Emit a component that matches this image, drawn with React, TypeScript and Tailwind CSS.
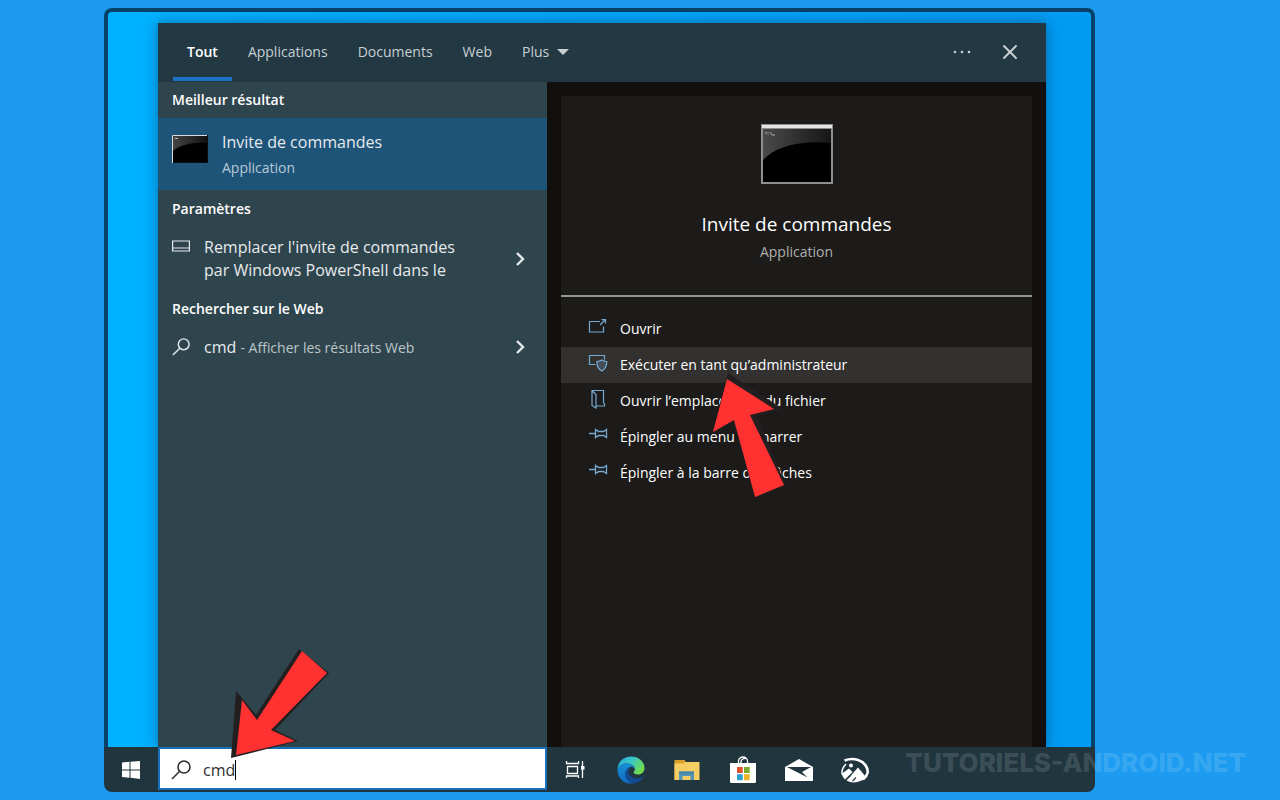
import type { ReactNode } from 'react';
import { X } from 'lucide-react';

interface Action {
  label: string;
  icon: ReactNode;
  active?: boolean;
}

const TABS = ['Applications', 'Documents', 'Web'];

function ConsoleIcon() {
  return (
    <svg viewBox="0 0 72 60" className="h-[60px] w-[72px]" aria-hidden="true">
      <defs>
        <linearGradient id="console-gloss" x1="0" y1="0" x2="1" y2="0">
          <stop offset="0" stopColor="#4a4a4a" />
          <stop offset="1" stopColor="#161616" />
        </linearGradient>
      </defs>
      <rect width="72" height="60" fill="#8f8f93" />
      <rect x="1" y="1" width="70" height="3" fill="#e4e4e6" />
      <rect x="2" y="5" width="68" height="53" fill="#000" />
      <path d="M2 5h68v14C40 16 15 22 2 36z" fill="url(#console-gloss)" />
      <path d="M4 9h2M7 8v1M7 10v1M9 8l2 3M11 11h3" stroke="#aaa" strokeWidth="1" fill="none" />
    </svg>
  );
}

function SmallConsoleIcon() {
  return (
    <svg viewBox="0 0 36 29" className="mt-4 mr-3.5 h-[29px] w-9" aria-hidden="true">
      <defs>
        <linearGradient id="console-gloss-small" x1="0" y1="0" x2="1" y2="0">
          <stop offset="0" stopColor="#454545" />
          <stop offset="1" stopColor="#111" />
        </linearGradient>
      </defs>
      <rect x="0" y="1" width="36" height="28" fill="#0b0f14" />
      <rect x="1" y="2" width="34" height="26" fill="#000" />
      <path d="M1 2h34v7C20 8 8 11 1 17z" fill="url(#console-gloss-small)" />
      <path d="M.5 29V1.500H35" fill="none" stroke="#d5dbe0" strokeWidth="1" />
      <path d="M3 4.500h3" stroke="#bbb" strokeWidth="1" />
    </svg>
  );
}

function SearchIcon({ className }: { className: string }) {
  return (
    <svg viewBox="0 0 20 20" fill="none" stroke="currentColor" strokeWidth="1.6" className={className} aria-hidden="true">
      <circle cx="13" cy="7" r="6" />
      <path d="M8.700 11.300 1 19" />
    </svg>
  );
}

function Chevron() {
  return (
    <svg viewBox="0 0 10 14" fill="none" stroke="currentColor" strokeWidth="2.4" className="h-3.5 w-2.5" aria-hidden="true">
      <path d="m2 1 6 6-6 6" />
    </svg>
  );
}

function OpenIcon() {
  return (
    <svg viewBox="0 0 20 20" fill="none" stroke="currentColor" strokeWidth="1.2" className="size-5" aria-hidden="true">
      <path d="M12 4.500H1.500v10.500h14V9.500M12 8l5-5M13.500 2.600h4v4" />
    </svg>
  );
}

function AdminIcon() {
  return (
    <svg viewBox="0 0 20 20" fill="none" stroke="currentColor" strokeWidth="1.2" className="size-5" aria-hidden="true">
      <path d="M7.500 11.500h-6v-9h15v4" />
      <path d="M13.800 7c1.400 1 3 1.500 5 1.500 0 4.500-1.400 7.500-5 9.500-3.600-2-5-5-5-9.500 2 0 3.600-.5 5-1.500z" fill="#76a9d2" fillOpacity=".25" />
    </svg>
  );
}

function FolderLocationIcon() {
  return (
    <svg viewBox="0 0 20 20" fill="none" stroke="currentColor" strokeWidth="1.200" className="size-5" aria-hidden="true">
      <path d="M8 17h8.500v-2l-1-1.500V1.500H4V16.500l4 2.500V5.500l-4-4" />
    </svg>
  );
}

function PinIcon() {
  return (
    <svg viewBox="0 0 20 20" fill="none" stroke="currentColor" strokeWidth="1.300" className="size-5" aria-hidden="true">
      <path d="M1 8.500h6.500M7.500 3.500v10M7.500 5.500h2l1 1h5l3-2v8l-3-2h-5l-1 1h-2" />
    </svg>
  );
}

const ACTIONS: Action[] = [
  { label: 'Ouvrir', icon: <OpenIcon /> },
  { label: 'Exécuter en tant qu’administrateur', icon: <AdminIcon />, active: true },
  { label: 'Ouvrir l’emplacement du fichier', icon: <FolderLocationIcon /> },
  { label: 'Épingler au menu Démarrer', icon: <PinIcon /> },
  { label: 'Épingler à la barre des tâches', icon: <PinIcon /> },
];

function ActionArrow() {
  return (
    <svg viewBox="0 0 84 132" className="pointer-events-none absolute top-[25px] left-[147px] z-10 h-[132px] w-[84px]" aria-hidden="true">
      <path d="M20 1 75 37l-26 7 29 70-31 12-22-76-21 11z" fill="#231f20" />
      <path d="M19 7 66 37 42 43l34 70-29 12L26 48 5 60z" fill="#ff3131" />
    </svg>
  );
}

function SearchArrow() {
  return (
    <svg viewBox="0 0 102 114" className="pointer-events-none absolute -top-[102px] left-[71px] z-10 h-[114px] w-[102px]" aria-hidden="true">
      <path d="M2 113 7 46l20 24L70 4l30 24-54 57 23 11z" fill="#231f20" />
      <path d="M7 110 13 55l15 20L73 6l25 22-56 57 24 11z" fill="#ff3131" />
    </svg>
  );
}

function SearchHeader() {
  return (
    <header className="flex h-[59px] items-stretch bg-[#223843] pr-6 pb-px pl-[15px] text-sm text-[#c8d0d4]">
      <nav className="flex flex-1 items-stretch gap-[30px]">
        <button className="-mr-3.5 border-y-4 border-t-transparent border-b-[#1a74c4] px-3.5 font-semibold text-white">Tout</button>
        {TABS.map((tab) => (
          <button key={tab}>{tab}</button>
        ))}
        <button className="flex items-center gap-2">
          Plus
          <svg viewBox="0 0 12 7" className="h-[7px] w-3 fill-current" aria-hidden="true"><path d="M0 0h12L6 6z" /></svg>
        </button>
      </nav>
      <button aria-label="Options" className="mr-[26px]">
        <svg viewBox="0 0 20 4" className="h-1 w-5 fill-current" aria-hidden="true">
          <circle cx="3" cy="2" r="1.300" />
          <circle cx="10" cy="2" r="1.300" />
          <circle cx="17" cy="2" r="1.300" />
        </svg>
      </button>
      <button aria-label="Fermer"><X className="size-6" strokeWidth={2} /></button>
    </header>
  );
}

function Results() {
  return (
    <section className="w-[389px] shrink-0 bg-[#2f454e] text-[#e6eaec]">
      <h2 className="flex h-9 items-center px-3.5 text-sm font-semibold text-white">Meilleur résultat</h2>
      <button className="flex h-[72px] w-full items-start bg-[#1f5479] px-3.5 text-left">
        <SmallConsoleIcon />
        <span className="flex flex-col pt-3">
          <span className="text-base leading-6">Invite de commandes</span>
          <span className="mt-1 text-sm leading-5 text-[#b5cad8]">Application</span>
        </span>
      </button>
      <h2 className="flex h-[38px] items-center px-3.5 text-sm font-semibold text-white">Paramètres</h2>
      <button className="flex h-[62px] w-full items-center pr-[22px] pl-3.5 text-left">
        <svg viewBox="0 0 18 12" fill="none" stroke="currentColor" strokeWidth="1.200" className="mt-3 h-3 w-[18px] self-start" aria-hidden="true">
          <path d="M.6 1h16.800v10H.6zM.6 8h16.800" />
        </svg>
        <span className="ml-3.5 flex-1 text-base leading-[23px]">
          Remplacer l'invite de commandes
          <br />
          par Windows PowerShell dans le
        </span>
        <Chevron />
      </button>
      <h2 className="flex h-[38px] items-center px-3.5 text-sm font-semibold text-white">Rechercher sur le Web</h2>
      <button className="flex h-[38px] w-full items-center pr-[22px] pl-3.5 text-left">
        <SearchIcon className="size-[18px]" />
        <span className="ml-3.5 flex-1 text-base">
          cmd <span className="text-sm text-[#bcc5c9]">- Afficher les résultats Web</span>
        </span>
        <Chevron />
      </button>
    </section>
  );
}

function Details() {
  return (
    <section className="flex flex-1 bg-[#11100f] px-3.5 pt-3.5">
      <div className="flex-1 bg-[#1c1b19] text-white">
        <div className="flex h-[201px] flex-col items-center border-b-2 border-[#93938f] pt-7">
          <ConsoleIcon />
          <h1 className="mt-[26px] text-[19px] leading-7">Invite de commandes</h1>
          <p className="mt-0.5 text-sm leading-6 text-[#b0afae]">Application</p>
        </div>
        <ul className="mt-3.5">
          {ACTIONS.map(({ label, icon, active }) => (
            <li key={label} className="relative">
              <button className={`flex h-9 w-full items-center gap-3 pl-[27px] text-left text-sm ${active ? 'bg-[#323130]' : ''}`}>
                <span className="mb-1 text-[#76a9d2]">{icon}</span>
                {label}
              </button>
              {active && <ActionArrow />}
            </li>
          ))}
        </ul>
      </div>
    </section>
  );
}

function TaskViewIcon() {
  return (
    <svg viewBox="0 0 20 20" fill="none" stroke="currentColor" strokeWidth="1.300" className="size-5" aria-hidden="true">
      <path d="M1.500 1v2.500h12V1M2.500 6.500h10v7h-10zM1.500 18v-2h12v2M17.500 1v17" />
      <path d="M16 6h3.500v3.500H16z" fill="currentColor" stroke="none" />
    </svg>
  );
}

function EdgeIcon() {
  return (
    <svg viewBox="0 0 28 28" className="size-7" aria-hidden="true">
      <defs>
        <linearGradient id="edge-top" x1="0" y1="0" x2="1" y2=".5">
          <stop offset="0" stopColor="#269fd8" />
          <stop offset=".5" stopColor="#38c9c8" />
          <stop offset="1" stopColor="#6edb51" />
        </linearGradient>
        <linearGradient id="edge-body" x1="0" y1="0" x2="0" y2="1">
          <stop offset="0" stopColor="#1690d8" />
          <stop offset="1" stopColor="#126bc0" />
        </linearGradient>
      </defs>
      <path d="M.5 13C1 5.500 7 .5 14 .5c8 0 13.500 5.500 13.500 11.500 0 4-3 6.500-6.500 6.500-3 0-4.500-1.200-4.500-2 0-.7 1.300-1.300 1.300-3.500C17.800 9.800 14 7.500 9.500 7.500 5.500 7.500 2 9.500.5 13z" fill="url(#edge-top)" />
      <path d="M.5 13C2 9.500 5.500 7.500 9.500 7.500c4.500 0 8.300 2.300 8.300 5.500-1-1.800-3-2.500-4.600-2-4 1.500-6 6-4 10.500 1.500 3.500 4.500 5.500 7.300 5.700C7.500 29 .5 22.500.5 14z" fill="url(#edge-body)" />
      <path d="M10.500 12.500c-3 3.500-3.500 8.500.5 12.500 4.500 4.200 12 2 15-3.500.4-.8-.1-1.200-.8-.8C19 24 12 21.500 11.500 16c0-1.500.5-2.700 1.700-4-.9-.2-2 .1-2.700.5z" fill="#134a91" />
    </svg>
  );
}

function ExplorerIcon() {
  return (
    <svg viewBox="0 0 26 22" className="h-[22px] w-[26px]" aria-hidden="true">
      <path d="M.5 1h10l1.500 2h12.500v18H.5z" fill="#dda12f" />
      <path d="M.5 4.500h9L12 3h13.500v18H.5z" fill="#f5cd62" />
      <path d="M5 21v-8.500h15V21h-3.500v-4h-8v4z" fill="#5295b8" />
      <path d="M5 12.500h15V15H5z" fill="#4885a8" />
    </svg>
  );
}

function StoreIcon() {
  return (
    <svg viewBox="0 0 28 28" className="size-7" aria-hidden="true">
      <path d="M9.500 8V5a4.500 4 0 0 1 9 0v3M12 8V5.500a4 3.500 0 0 1 5-3" fill="none" stroke="#fff" strokeWidth="1.300" />
      <path d="M1 7h26v18.500a1.500 1.500 0 0 1-1.500 1.500h-23A1.500 1.500 0 0 1 1 25.500z" fill="#fff" />
      <path d="M8 11h5.700v6H8z" fill="#d9532c" />
      <path d="M15 11h5.700v6H15z" fill="#7bab2a" />
      <path d="M8 18.200h5.700v6H8z" fill="#2f9fd0" />
      <path d="M15 18.200h5.700v6H15z" fill="#eeb32c" />
    </svg>
  );
}

function MailIcon() {
  return (
    <svg viewBox="0 0 28 24" className="h-6 w-7" aria-hidden="true">
      <path d="M0 9 14 1l14 8v14H0z" fill="#fff" />
      <path d="M2 9h24l-9 5 5.500 5.500z" fill="#20353e" />
    </svg>
  );
}

function PhotoSearchIcon() {
  return (
    <svg viewBox="0 0 28 26" className="h-[26px] w-7" aria-hidden="true">
      <path d="M3.500 3.500c4-1.500 9-2 13.500-.5C23.500 5 27.500 11 26.500 16c-.7 3-2.500 5-4.500 6.500" fill="none" stroke="#fff" strokeWidth="2.600" />
      <path d="M5 7C1.500 10.500.5 14 1.200 17.500" fill="none" stroke="#fff" strokeWidth="1.500" />
      <path d="m1 16.500 7-5 3.500 3.500L4 22.500C2 20.500 1 18.500 1 16.500z" fill="#fff" />
      <path d="m5.500 23.500 11.500-13 8 9.500c-4.500 5.500-13.500 7-19.500 3.500z" fill="#fff" />
      <circle cx="10" cy="8.500" r="2" fill="#fff" />
      <path d="m7 21 3-3M15 20.500l-3.500 3.500" stroke="#20353e" strokeWidth="1.200" />
    </svg>
  );
}

const TASKBAR_APPS = [
  { label: 'Affichage des tâches', icon: <TaskViewIcon /> },
  { label: 'Microsoft Edge', icon: <EdgeIcon /> },
  { label: 'Explorateur de fichiers', icon: <ExplorerIcon /> },
  { label: 'Microsoft Store', icon: <StoreIcon /> },
  { label: 'Courrier', icon: <MailIcon /> },
  { label: 'Photos', icon: <PhotoSearchIcon /> },
];

function Taskbar() {
  return (
    <footer className="flex h-[45px] items-stretch rounded-b-lg bg-[#20353e] text-white">
      <button aria-label="Démarrer" className="flex w-[54px] items-center justify-center">
        <svg viewBox="0 0 18 18" className="size-[18px] fill-current" aria-hidden="true">
          <path d="M0 1.500 7.500.8v7.700H0zM8.500.7 18 0v8.500H8.500zM0 9.500h7.500v7.200L0 16zM8.500 9.500H18V18l-9.500-1.200z" />
        </svg>
      </button>
      <div className="relative mb-0.5 w-[389px] shrink-0">
        <label className="flex h-full items-center border-2 border-[#1a70b8] bg-white pt-0.5 pl-[11px] text-[#303030]">
          <SearchIcon className="size-5" />
          <input
            aria-label="Rechercher"
            defaultValue="cmd"
            className="ml-3 field-sizing-content text-base outline-none"
          />
          <span className="h-5 w-px bg-black" />
        </label>
        <SearchArrow />
      </div>
      <div className="flex">
        {TASKBAR_APPS.map(({ label, icon }) => (
          <button key={label} aria-label={label} className="flex w-14 items-center justify-center">{icon}</button>
        ))}
      </div>
    </footer>
  );
}

export default function App() {
  return (
    <div className="relative flex min-h-screen bg-[#1c9bf0] py-2 pr-[185px] pl-[104px] font-['Segoe_UI','Open_Sans',sans-serif]">
      <main className="flex flex-1 flex-col">
        <div className="flex flex-1 rounded-t-lg border-x-4 border-t-4 border-[#064269] bg-linear-to-r from-[#00b2ff] to-[#019bf3] pt-[11px] pr-[45px] pl-[50px]">
          <div className="flex flex-1 flex-col shadow-[0_0_12px_rgba(0,40,80,0.5)]">
            <SearchHeader />
            <div className="flex flex-1">
              <Results />
              <Details />
            </div>
          </div>
        </div>
        <Taskbar />
      </main>
      <p className="pointer-events-none absolute right-[34px] bottom-[18px] font-['Inter',sans-serif] text-[26px] font-extrabold text-white/15">
        TUTORIELS-ANDROID.NET
      </p>
    </div>
  );
}
